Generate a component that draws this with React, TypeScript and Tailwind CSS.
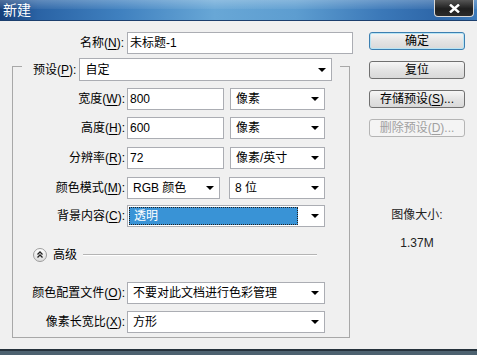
import type { ReactNode } from 'react';

const font = { fontFamily: '"Liberation Sans", "Noto Sans CJK SC", sans-serif' };

function Key({ k }: { k: string }) {
  return <span className="underline underline-offset-[2px]">{k}</span>;
}

function Label({ text, k, className }: { text: string; k: string; className: string }) {
  return (
    <div className={`shrink-0 whitespace-nowrap text-right ${className}`}>
      {text}(<Key k={k} />):
    </div>
  );
}

function Arrow() {
  return <span className="mr-[5px] h-0 w-0 shrink-0 border-x-[4px] border-t-[4px] border-x-transparent border-t-black" />;
}

function Select({ value, className, selected }: { value: string; className: string; selected?: boolean }) {
  return (
    <div className={`flex h-full shrink-0 items-center border border-[#abadb3] bg-white ${className}`}>
      {selected ? (
        <div className="mx-[1px] mr-[13px] flex h-[18px] flex-1 items-center border border-dotted border-[#222] bg-[#3993d6] pl-[4px] text-white">
          {value}
        </div>
      ) : (
        <div className="flex-1 whitespace-nowrap pl-[5px]">{value}</div>
      )}
      <Arrow />
    </div>
  );
}

function Input({ value, className }: { value: string; className: string }) {
  return (
    <div className={`flex h-full shrink-0 items-center border border-[#abadb3] bg-white pl-[2px] ${className}`}>
      {value}
    </div>
  );
}

function Row({ children, className }: { children: ReactNode; className: string }) {
  return <div className={`flex h-[22px] items-center ${className}`}>{children}</div>;
}

function Button({ children, primary, disabled }: { children: ReactNode; primary?: boolean; disabled?: boolean }) {
  return (
    <div
      className={`flex h-[18px] items-center justify-center rounded-[3px] border bg-[linear-gradient(#f6f6f6,#e4e4e4_50%,#d9d9d9)] ${
        primary
          ? 'border-[#3c7fb1] shadow-[inset_0_0_0_1px_#b8e4f4]'
          : disabled
          ? 'border-[#b5b5b5] bg-none bg-[#f4f4f4] text-[#a0a0a0]'
          : 'border-[#707070]'
      }`}
    >
      {children}
    </div>
  );
}

export default function App() {
  return (
    <div className="flex h-[355px] w-[477px] flex-col overflow-hidden bg-[#f0f0f0] text-[12px] text-black" style={font}>
      {/* title bar */}
      <div className="relative flex h-[21px] shrink-0 items-center border-b border-[#1c3f6e] bg-[linear-gradient(90deg,#163f7a_0%,#2a63a5_8%,#3f80bf_25%,#68a7d6_45%,#5d9dd0_62%,#3b78b8_80%,#2d66a8_92%,#3d7bbb_100%)]">
        <div className="absolute inset-x-0 top-0 h-[9px] bg-[linear-gradient(rgba(255,255,255,0.25),rgba(255,255,255,0.05))]" />
        <span className="relative pl-[3px] text-[14px] text-white">新建</span>
        <div className="absolute right-[3px] top-0 flex h-[17px] w-[40px] items-center justify-center rounded-b-[4px] border border-t-0 border-[#d8d8d8] bg-[linear-gradient(#555,#1f1f1f_55%,#2b2b2b)]">
          <svg width="11" height="9" viewBox="0 0 11 9">
            <path d="M1 0.5 L10 8.5 M10 0.5 L1 8.5" stroke="white" strokeWidth="2.4" />
          </svg>
        </div>
      </div>

      {/* body */}
      <div className="flex flex-1 pt-[11px]">
        <div className="flex w-[354px] shrink-0 flex-col">
          <Row className="h-[22px]">
            <Label text="名称" k="N" className="w-[124px]" />
            <Input value="未标题-1" className="ml-[3px] w-[226px]" />
          </Row>

          <fieldset className="ml-[12px] mt-[-2px] w-[338px] border border-[#a8a8a8] px-0 pb-[4px]">
            <legend className="ml-[9px] flex items-center pl-[11px] pr-[8px] pt-[6px]">
              <Label text="预设" k="P" className="" />
              <div className="ml-[3px] h-[23px]">
                <Select value="自定" className="w-[253px]" />
              </div>
            </legend>

            <Row className="mt-[7px]">
              <Label text="宽度" k="W" className="w-[112px]" />
              <Input value="800" className="ml-[2px] w-[97px]" />
              <Select value="像素" className="ml-[6px] w-[95px]" />
            </Row>
            <Row className="mt-[7px]">
              <Label text="高度" k="H" className="w-[112px]" />
              <Input value="600" className="ml-[2px] w-[97px]" />
              <Select value="像素" className="ml-[6px] w-[95px]" />
            </Row>
            <Row className="mt-[8px]">
              <Label text="分辨率" k="R" className="w-[112px]" />
              <Input value="72" className="ml-[2px] w-[97px]" />
              <Select value="像素/英寸" className="ml-[6px] w-[95px]" />
            </Row>
            <Row className="mt-[8px]">
              <Label text="颜色模式" k="M" className="w-[112px]" />
              <Select value="RGB 颜色" className="ml-[2px] w-[93px]" />
              <Select value="8 位" className="ml-[9px] w-[96px]" />
            </Row>
            <Row className="mt-[6px]">
              <Label text="背景内容" k="C" className="w-[112px]" />
              <Select value="透明" className="ml-[2px] w-[198px]" selected />
            </Row>

            <div className="mt-[20px] flex h-[15px] items-center pl-[20px] pr-[32px]">
              <svg width="14" height="14" viewBox="0 0 14 14" className="shrink-0">
                <defs>
                  <linearGradient id="cb" x1="0" y1="0" x2="0" y2="1">
                    <stop offset="0" stopColor="#ffffff" />
                    <stop offset="1" stopColor="#dcdcdc" />
                  </linearGradient>
                </defs>
                <circle cx="7" cy="7" r="6.5" fill="url(#cb)" stroke="#9c9c9c" />
                <path d="M4.5 6.5 L7 4 L9.5 6.5 M4.5 9.5 L7 7 L9.5 9.5" fill="none" stroke="#222" strokeWidth="1.3" />
              </svg>
              <span className="ml-[6px] shrink-0">高级</span>
              <div className="ml-[6px] h-[2px] flex-1 border-t border-b border-t-[#b4b4b4] border-b-white" />
            </div>

            <Row className="mt-[20px] h-[21px]">
              <Label text="颜色配置文件" k="O" className="w-[112px]" />
              <Select value="不要对此文档进行色彩管理" className="ml-[2px] w-[198px]" />
            </Row>
            <Row className="mt-[7px] h-[21px]">
              <Label text="像素长宽比" k="X" className="w-[112px]" />
              <Select value="方形" className="ml-[2px] w-[198px]" />
            </Row>
          </fieldset>
        </div>

        <div className="ml-[15px] flex w-[96px] flex-col">
          <div className="flex flex-col gap-[11px]">
            <Button primary>确定</Button>
            <Button>复位</Button>
            <Button>
              存储预设(<Key k="S" />)...
            </Button>
            <Button disabled>
              删除预设(<Key k="D" />)...
            </Button>
          </div>
          <div className="mt-[69px] flex flex-col items-center gap-[10px] text-[#222]">
            <span>图像大小:</span>
            <span>1.37M</span>
          </div>
        </div>
      </div>

      {/* bottom frame */}
      <div className="h-[6px] shrink-0 border-t-[2px] border-[#26323c] bg-[#4d6270]" />
    </div>
  );
}
